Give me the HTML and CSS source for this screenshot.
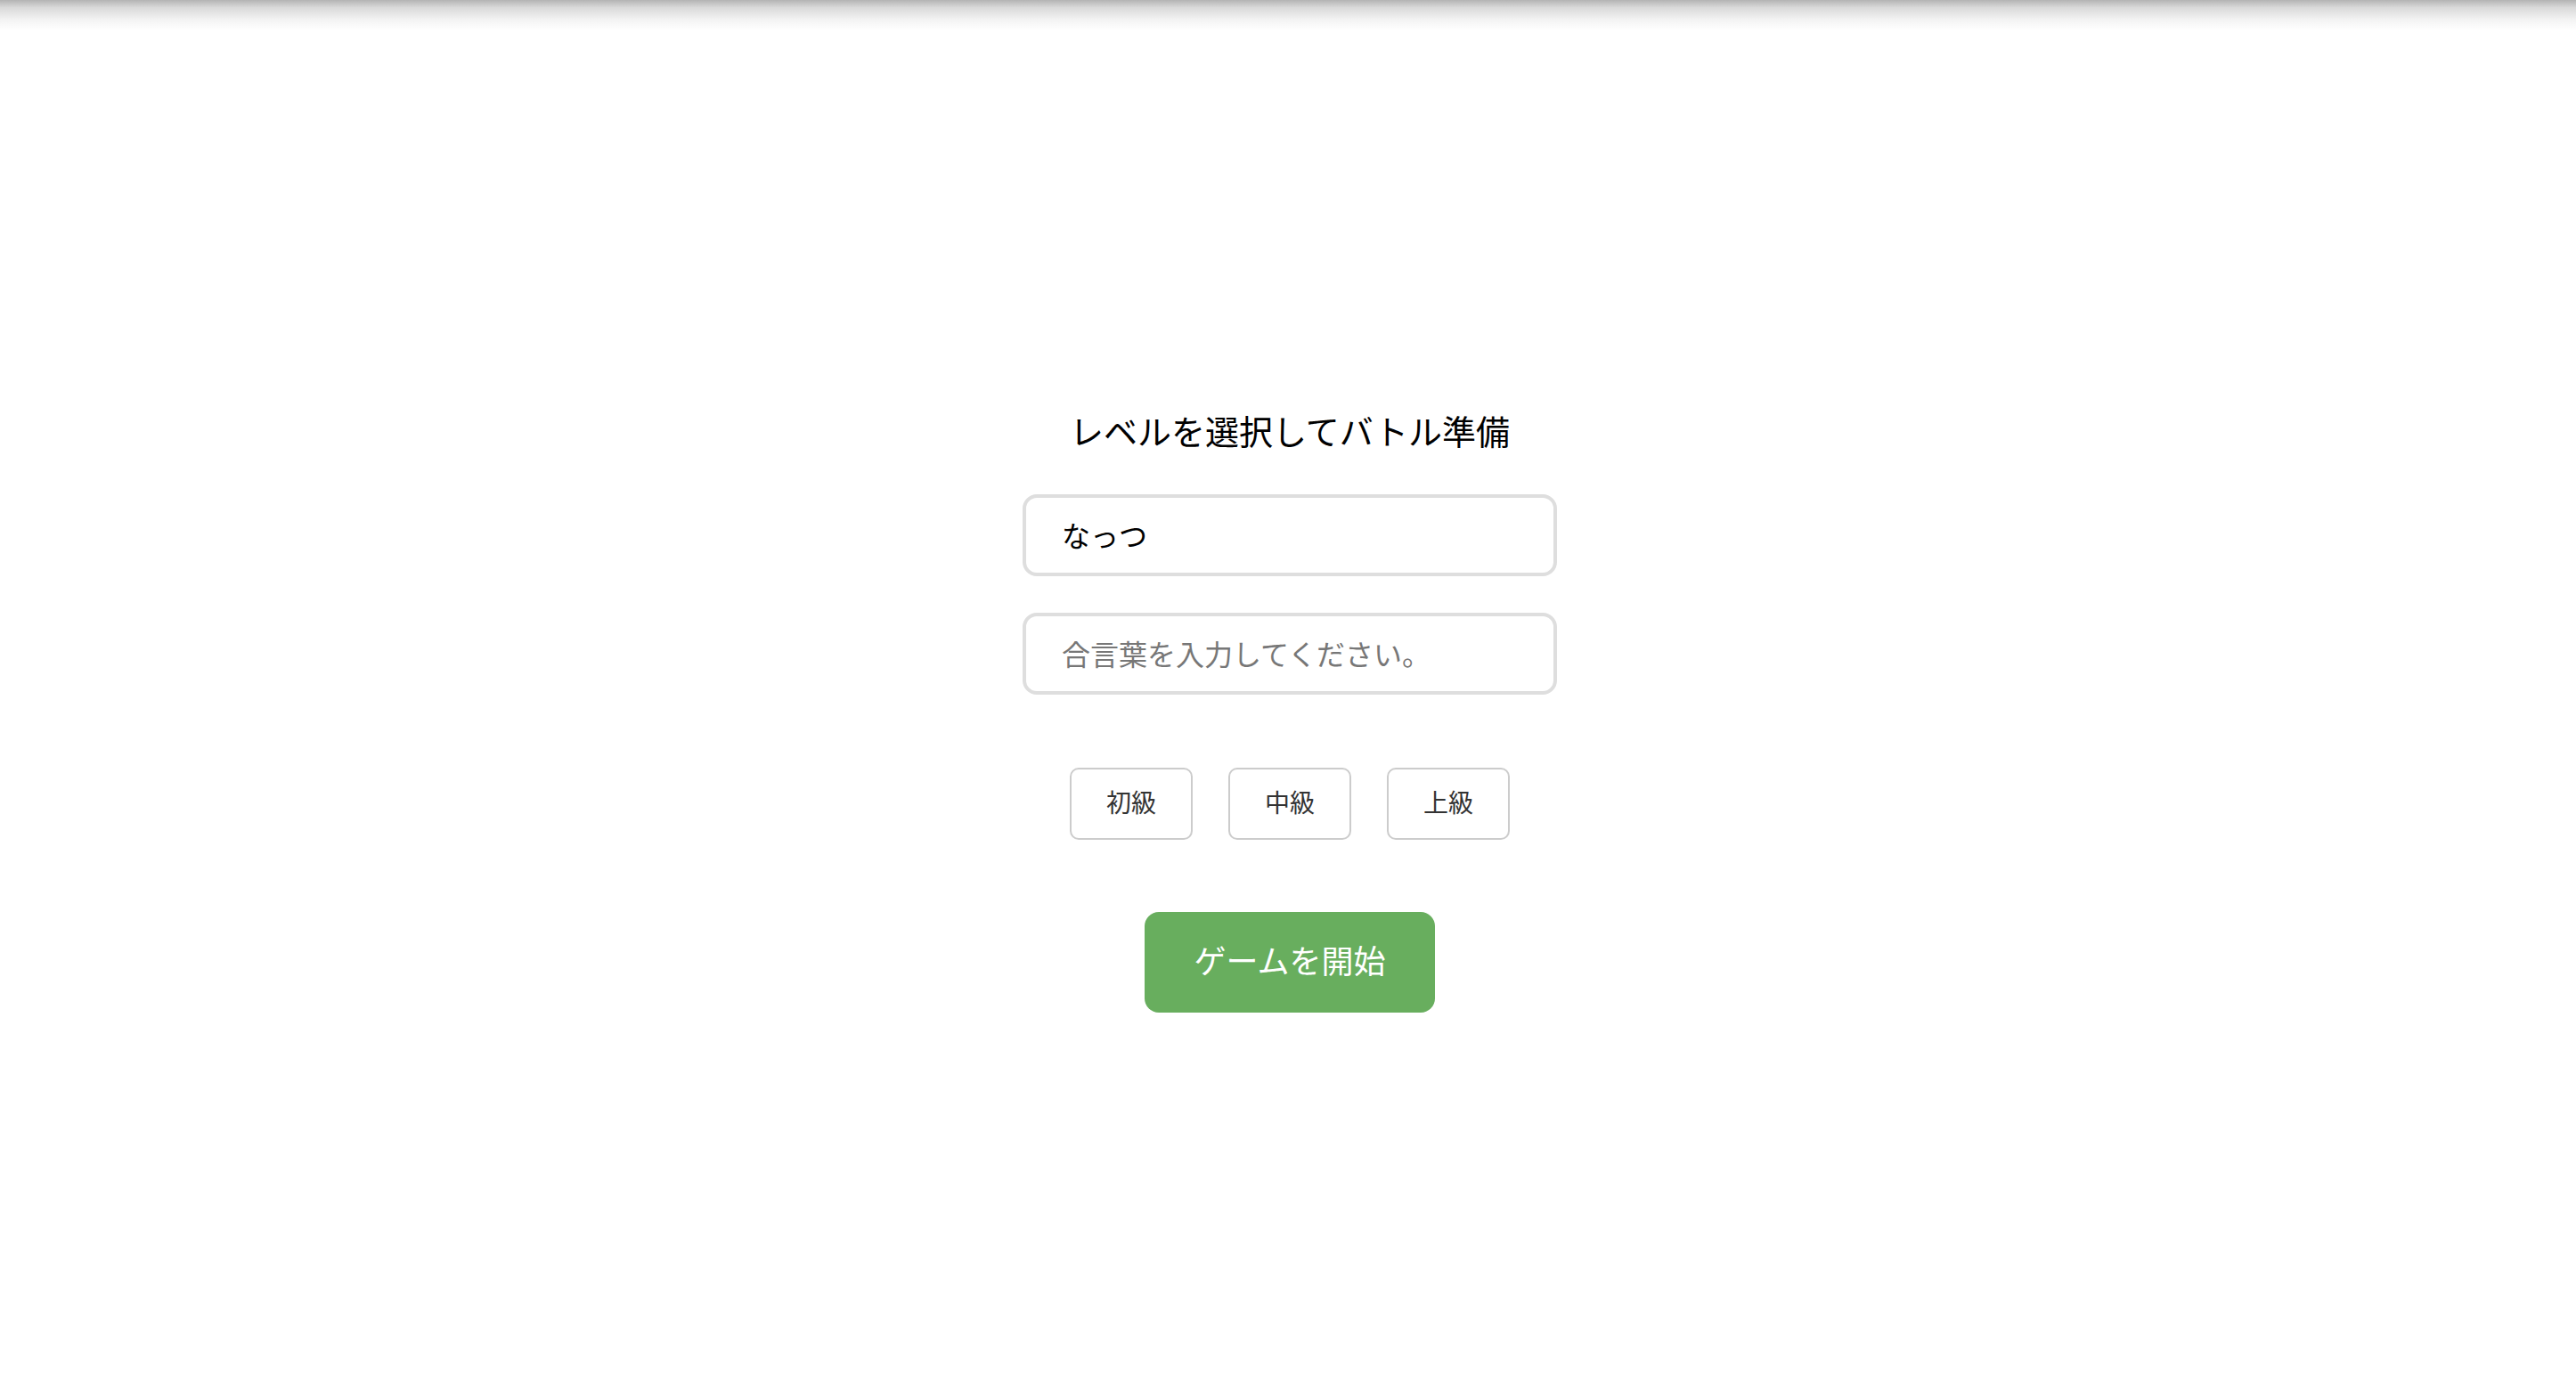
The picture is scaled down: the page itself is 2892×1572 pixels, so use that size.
FILE: index.html
```html
<!DOCTYPE html>
<html lang="ja">
<head>
<meta charset="utf-8">
<title>レベルを選択してバトル準備</title>
<link rel="stylesheet" href="styles.css">
</head>
<body>
<div class="top-shadow"></div>
<main class="page">
  <section class="setup">
    <h1 class="title">レベルを選択してバトル準備</h1>
    <input class="field" type="text" value="なっつ">
    <input class="field" type="text" placeholder="合言葉を入力してください。">
    <div class="levels">
      <button class="level" type="button">初級</button>
      <button class="level" type="button">中級</button>
      <button class="level" type="button">上級</button>
    </div>
    <button class="start" type="button">ゲームを開始</button>
  </section>
</main>
</body>
</html>
```

FILE: styles.css
```css
html, body {
  margin: 0;
  padding: 0;
  background: #ffffff;
}

body {
  font-family: "Noto Sans CJK JP", "Noto Sans", sans-serif;
  color: #000;
}

.top-shadow {
  position: fixed;
  top: 0;
  left: 0;
  right: 0;
  height: 34px;
  background: linear-gradient(to bottom, #b3b3b3 0%, #d9d9d9 25%, #f3f3f3 65%, rgba(255,255,255,0) 100%);
  pointer-events: none;
}

.page {
  min-height: 100vh;
  box-sizing: border-box;
  padding-top: 20px;
  padding-left: 4px;
  display: flex;
  align-items: center;
  justify-content: center;
}

.setup {
  display: flex;
  flex-direction: column;
  align-items: center;
}

.title {
  margin: 0 0 45px;
  font-size: 38px;
  font-weight: 400;
  line-height: 55px;
  color: #000;
}

.field {
  box-sizing: border-box;
  width: 600px;
  height: 92px;
  margin: 0 0 41px;
  padding: 0 40px 3px;
  border: 4px solid #dedede;
  border-radius: 16px;
  font-family: inherit;
  font-size: 32px;
  color: #000;
  background: #fff;
  outline: none;
}

.field::placeholder {
  color: #777;
}

.setup .field:last-of-type {
  margin-bottom: 82px;
}

.levels {
  display: flex;
  gap: 40px;
  margin-bottom: 81px;
}

.level {
  box-sizing: border-box;
  height: 81px;
  padding: 0 39px 5px;
  border: 2px solid #cccccc;
  border-radius: 10px;
  background: #fff;
  font-family: inherit;
  font-size: 28px;
  color: #333;
  cursor: pointer;
}

.start {
  box-sizing: border-box;
  height: 113px;
  padding: 0 56px 7px;
  border: none;
  border-radius: 16px;
  background: #68ae5e;
  color: #fff;
  font-family: inherit;
  font-size: 36px;
  cursor: pointer;
}
```
